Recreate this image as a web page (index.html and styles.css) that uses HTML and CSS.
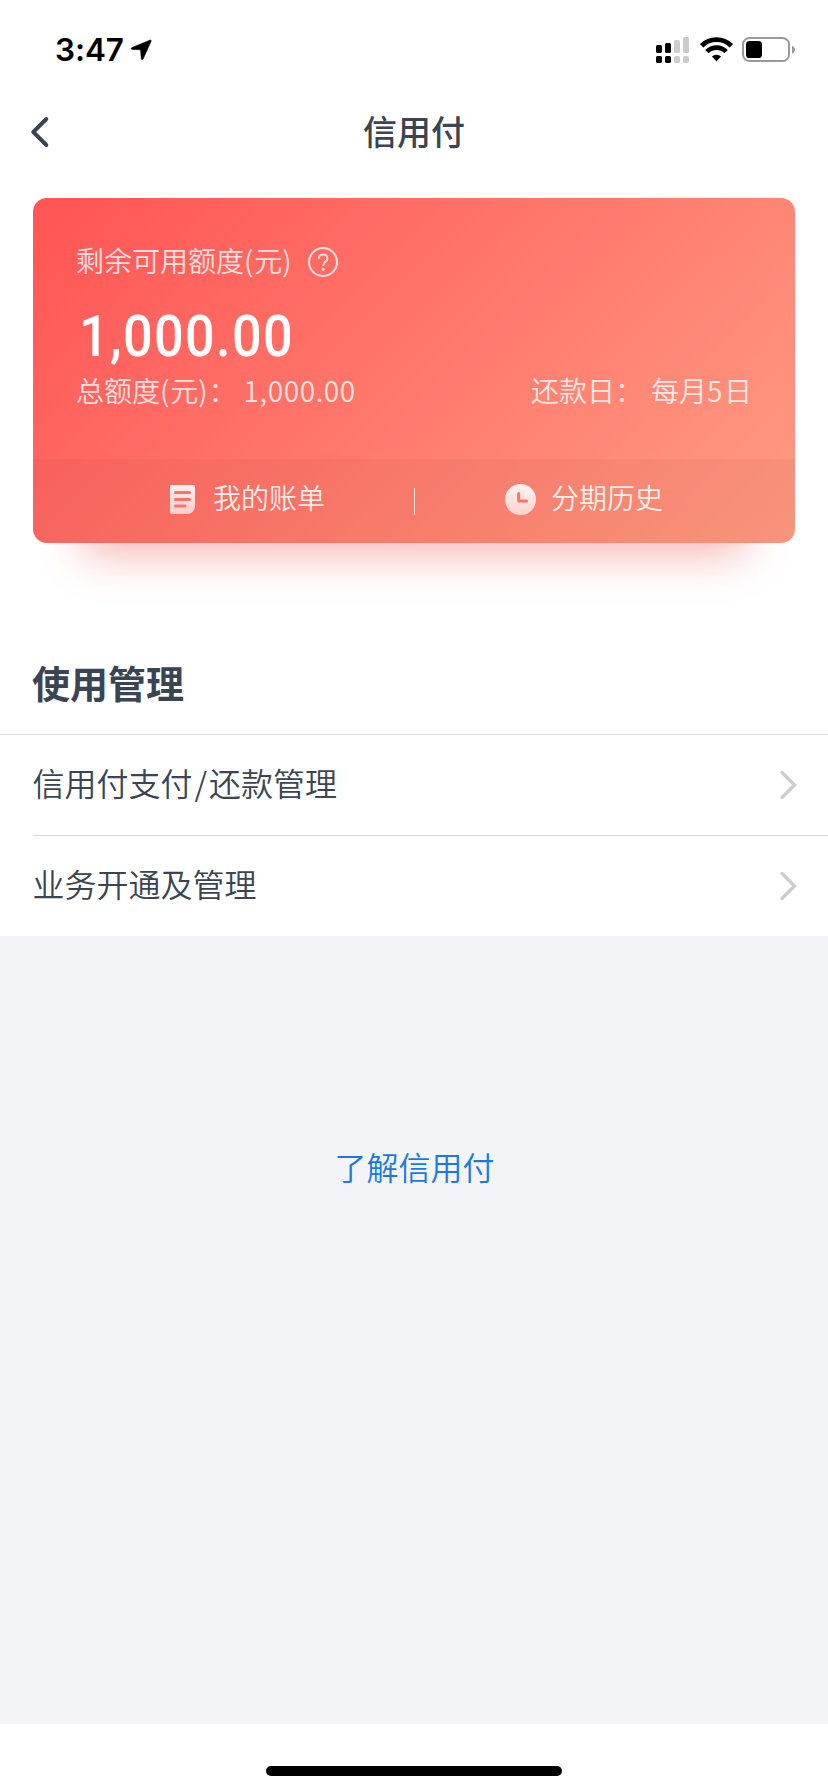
FILE: index.html
```html
<!DOCTYPE html>
<html lang="zh-CN">
<head>
<meta charset="utf-8">
<title>信用付</title>
<link rel="stylesheet" href="styles.css">
</head>
<body>
<div class="screen">
  <div class="status">
    <span class="time">3:47</span>
    <svg class="locate" width="22" height="22" viewBox="0 0 22 22"><path d="M19.8 1.2 2 8.6C.8 9.1 1 10.3 2.3 10.4L10.6 10.8 11.2 19.4C11.3 20.8 12.7 21 13.2 19.8L21 2.5C21.4 1.4 20.7.8 19.8 1.2Z"/></svg>
    <svg class="indicators" width="140" height="28" viewBox="0 0 140 28">
      <g fill="#000"><rect y="9" width="6" height="8" rx="1.6"/><rect x="9" y="7" width="6" height="10" rx="1.6"/><rect y="20" width="6" height="7" rx="1.6"/><rect x="9" y="20" width="6" height="7" rx="1.6"/></g>
      <g fill="#ccc"><rect x="18" y="4" width="6" height="13" rx="1.6"/><rect x="27" y="1" width="6" height="16" rx="1.6"/><rect x="18" y="20" width="6" height="7" rx="1.6"/><rect x="27" y="20" width="6" height="7" rx="1.6"/></g>
      <g fill="none" stroke="#000" stroke-width="4.800"><path d="M45.650 9.750a21 21 0 0 1 29.700 0"/><path d="M50.900 15.600a13.600 13.600 0 0 1 19.200 0"/></g>
      <path d="M55.900 20.600a6.500 6.500 0 0 1 9.200 0L60.500 25.200Z"/>
      <rect x="87" y="2" width="46" height="23" rx="6.500" fill="none" stroke="#999" stroke-width="2"/>
      <rect x="90" y="5" width="16" height="17" rx="3.600"/>
      <path d="M136 10c4 1.200 4 6.300 0 7.500Z" fill="#999"/>
    </svg>
  </div>
  <header class="nav">
    <svg class="back" width="20" height="32" viewBox="0 0 20 32"><path d="M16.300 3 3.300 16l13 13"/></svg>
    <h1 class="title">信用付</h1>
  </header>
  <section class="card">
    <div class="summary">
      <div class="label"><span>剩余可用额度<span class="paren">(</span>元<span class="paren">)</span></span>
        <svg width="30" height="30" viewBox="0 0 30 30"><circle cx="15" cy="15" r="14"/><path d="M10.800 11.700c0-2.500 1.700-4.200 4.300-4.200s4.300 1.600 4.300 3.900c0 3.300-4.300 3.700-4.300 7.500"/><circle class="dot" cx="15.100" cy="22.200" r="1.500"/></svg>
      </div>
      <div class="amount">1,000.00</div>
      <div class="details">
        <div class="pair"><span>总额度<span class="paren">(</span>元<span class="paren">)</span>：</span><span class="total">1,000.00</span></div>
        <div class="pair"><span>还款日：</span><span>每月<span class="day">5</span>日</span></div>
      </div>
    </div>
    <div class="actions">
      <div class="action bill">
        <svg width="25" height="29" viewBox="0 0 25 29"><defs><linearGradient id="fade" x2="0" y2="1"><stop stop-color="#fff" stop-opacity=".9"/><stop offset="1" stop-color="#fff" stop-opacity=".65"/></linearGradient></defs><path fill="url(#fade)" d="M2 0H23Q25 0 25 2V20Q25 29 16 29H2Q0 29 0 27V2Q0 0 2 0Z"/><path class="cut" d="M5.500 7.500H19.500M5.500 14.500H19.500M5.500 21H15"/></svg>
        <span>我的账单</span>
      </div>
      <i class="divider"></i>
      <div class="action history">
        <svg width="31" height="31" viewBox="0 0 31 31"><circle cx="15.500" cy="15.500" r="15.500" fill="url(#fade)"/><path class="cut" d="M13.700 9.500V17H21.500"/></svg>
        <span>分期历史</span>
      </div>
    </div>
  </section>
  <h2 class="heading">使用管理</h2>
  <div class="list">
    <div class="row"><span>信用付支付<span class="slash">/</span>还款管理</span><svg width="18" height="30" viewBox="0 0 18 30"><path d="M3 2.500 15.500 15 3 27.500"/></svg></div>
    <div class="row"><span>业务开通及管理</span><svg width="18" height="30" viewBox="0 0 18 30"><path d="M3 2.500 15.500 15 3 27.500"/></svg></div>
  </div>
  <main class="rest"><a class="link">了解信用付</a></main>
  <footer class="bottom"><div class="home"></div></footer>
</div>
</body>
</html>
```
FILE: styles.css
```css
* { box-sizing: border-box; }
body { margin: 0; background: #fff; color: #3a4452; font-family: "Noto Sans CJK SC", sans-serif; font-weight: 350; }
svg { display: block; flex: none; }
h1, h2 { margin: 0; }
.screen { width: 828px; height: 1792px; display: flex; flex-direction: column; background: #fff; }

.status { height: 88px; display: flex; align-items: flex-start; padding: 30px 32px 0 55px; color: #000; }
.time { width: 75px; font: 600 31.500px/40px Inter, sans-serif; letter-spacing: -.1px; }
.locate { margin-top: 9px; stroke: #000; stroke-width: .6; }
.indicators { margin: 6px 0 0 auto; }

.nav { height: 88px; display: grid; grid-template-columns: 60px 1fr 60px; align-items: center; padding: 0 30px; }
.back path { fill: none; stroke: #3a4452; stroke-width: 4; stroke-linecap: round; stroke-linejoin: round; }
.title { font-size: 34px; line-height: 50px; font-weight: 500; text-align: center; padding-bottom: 2px; }

.card { height: 345px; margin: 22px 33px 0; border-radius: 14px; overflow: hidden; color: rgba(255,255,255,.82); font-size: 28px; display: flex; flex-direction: column; background: linear-gradient(135deg, #ff5454 0%, #ff9c83 100%); box-shadow: 0 62px 40px -50px rgba(225,70,65,.38); }
.summary { flex: 1; padding: 42px 43px 0 43px; }
.label { display: flex; align-items: center; gap: 15px; height: 40px; line-height: 40px; }
.label svg { margin-top: 4px; fill: none; stroke: rgba(255,255,255,.8); stroke-width: 2; }
.label .dot { fill: rgba(255,255,255,.8); stroke: none; }
.paren { letter-spacing: 1px; }
.amount { height: 76px; margin: 18px 0 0 3px; font: 500 58px/76px Roboto, sans-serif; letter-spacing: 1.500px; color: #fff; transform: scaleX(.9); transform-origin: 0 50%; }
.details { display: flex; justify-content: space-between; height: 40px; line-height: 40px; margin-top: -4px; }
.pair { display: flex; gap: 8px; }
.total { letter-spacing: .6px; margin-left: -1px; }
.day { letter-spacing: 1.500px; }
.actions { height: 84px; display: flex; align-items: center; justify-content: space-between; padding: 0 132px 0 137px; background: rgba(140,50,40,.07); color: rgba(255,255,255,.88); }
.action { display: flex; align-items: center; line-height: 40px; }
.action span { margin-top: -8px; }
.action svg { margin-top: -3px; }
.bill { gap: 18px; }
.history { gap: 15px; }
.cut { fill: none; stroke: #f67468; stroke-width: 3; stroke-linecap: round; stroke-linejoin: round; }
.divider { width: 1px; height: 27px; margin-right: 2px; background: rgba(255,255,255,.8); }

.heading { height: 191px; padding: 112px 32px 0; font-size: 38px; line-height: 54px; font-weight: 700; }
.list { height: 202px; border-top: 1px solid #dedfe1; }
.row { height: 100px; margin-left: 33px; padding-right: 31px; display: flex; align-items: center; justify-content: space-between; font-size: 32px; line-height: 48px; }
.row + .row { height: 101px; border-top: 1px solid #d8d8da; }
.row > span { margin: -7px 0 0 -.5px; }
.row .slash { margin: 0 2px; }
.row path { fill: none; stroke: #cccdd2; stroke-width: 3.400; stroke-linecap: round; }

.rest { height: 788px; background: #f3f4f8; text-align: center; padding: 206px 0 0 1px; }
.link { color: #1a78e0; font-size: 32px; line-height: 48px; }
.bottom { height: 68px; display: flex; justify-content: center; padding-top: 42px; }
.home { width: 296px; height: 10px; border-radius: 5px; background: #000; }
```
